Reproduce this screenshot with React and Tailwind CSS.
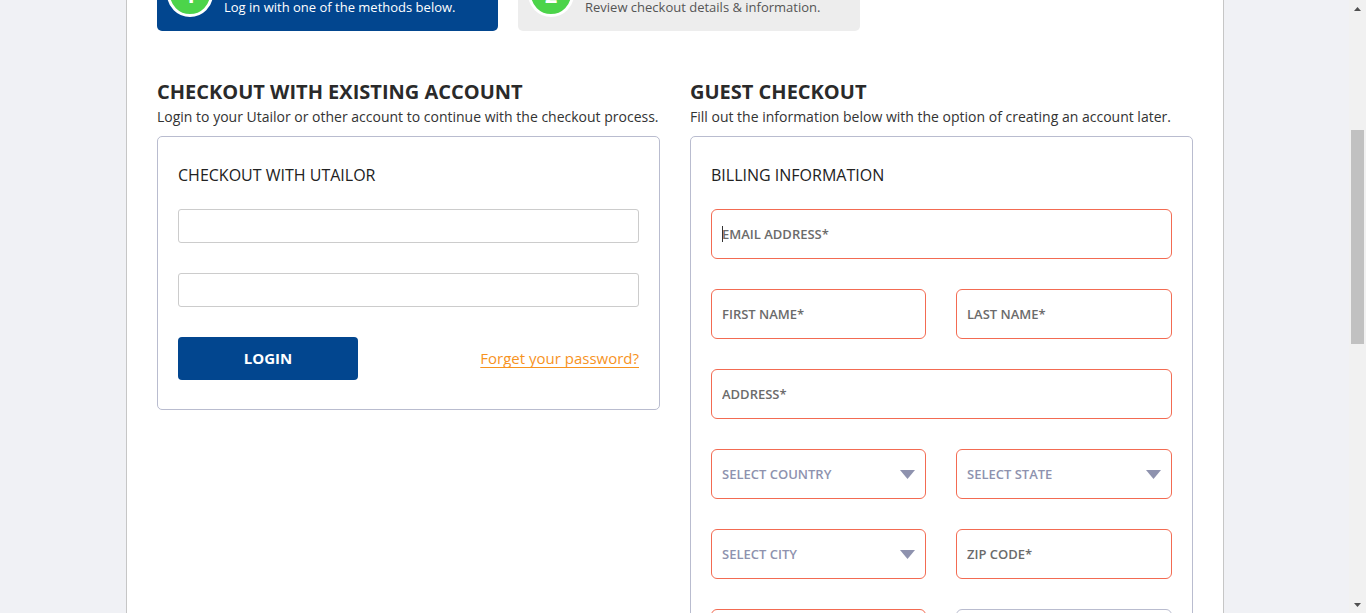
import { useLayoutEffect, useRef } from "react";

const billingRows = [
  [{ label: "EMAIL ADDRESS*", full: true, focused: true }],
  [{ label: "FIRST NAME*" }, { label: "LAST NAME*" }],
  [{ label: "ADDRESS*", full: true }],
  [
    { label: "SELECT COUNTRY", select: true },
    { label: "SELECT STATE", select: true },
  ],
  [{ label: "SELECT CITY", select: true }, { label: "ZIP CODE*" }],
  [{ label: "PHONE NUMBER*" }, { label: "COMPANY NAME", optional: true }],
];

const Triangle = () => (
  <svg width="15" height="9" viewBox="0 0 15 9" className="shrink-0">
    <polygon points="0,0 15,0 7.5,9" fill="#8e92ae" />
  </svg>
);

const BillingField = ({ label, full, select, focused, optional }) => {
  const border = optional ? "border-[#b9bccf]" : "border-[#f36b52]";

  if (select) {
    return (
      <button
        type="button"
        className={`flex h-[50px] w-full items-center justify-between rounded-[6px] border ${border} bg-white pl-[10px] pr-[10px] text-left text-[13px] font-semibold text-[#8e92ae]`}
      >
        <span className="pt-[2px]">{label}</span>
        <Triangle />
      </button>
    );
  }

  return (
    <div className={`relative ${full ? "col-span-2" : ""}`}>
      <input
        type="text"
        placeholder={label}
        className={`block h-[50px] w-full rounded-[6px] border ${border} bg-white px-[10px] text-[13px] font-semibold text-[#444] outline-none placeholder:text-[#6b6b6b]`}
      />
      {focused && (
        <span className="pointer-events-none absolute left-[11px] top-[17px] h-[16px] w-px bg-[#333]" />
      )}
    </div>
  );
};

const StepCard = ({ number, title, text, active, width }) => (
  <div
    className={`flex h-[71px] items-start gap-[11px] rounded-[5px] px-[10px] pt-[11px] ${width} ${
      active ? "bg-[#02468f] text-white" : "bg-[#ededed] text-[#555]"
    }`}
  >
    <div className="flex h-[46px] w-[46px] shrink-0 items-center justify-center rounded-full border-[3px] border-white bg-[#4cd44a] text-[22px] font-bold leading-none text-white">
      {number}
    </div>
    <div className="flex flex-col pt-[7px]">
      <span className="text-[15px] font-bold leading-[20px]">{title}</span>
      <span className="text-[13px] leading-[18px]">{text}</span>
    </div>
  </div>
);

const FakeScrollbar = () => (
  <div className="flex h-full w-[17px] shrink-0 flex-col bg-[#f1f1f1]">
    <div className="flex h-[17px] items-center justify-center">
      <svg width="7" height="4" viewBox="0 0 7 4">
        <polygon points="0,4 7,4 3.5,0" fill="#505050" />
      </svg>
    </div>
    <div className="mx-[2px] mt-[113px] h-[214px] bg-[#c1c1c1]" />
    <div className="mt-auto flex h-[17px] items-center justify-center">
      <svg width="7" height="4" viewBox="0 0 7 4">
        <polygon points="0,0 7,0 3.5,4" fill="#505050" />
      </svg>
    </div>
  </div>
);

export default function App() {
  const scrollRef = useRef(null);

  // page is shown scrolled down past the header
  useLayoutEffect(() => {
    if (scrollRef.current) scrollRef.current.scrollTop = 60;
  }, []);

  return (
    <div className="flex h-[613px] overflow-hidden bg-[#f0f1f5] font-['Open_Sans',sans-serif] text-[#2a2a2a]">
      <div
        ref={scrollRef}
        className="h-full min-w-0 flex-1 overflow-y-auto pl-[126px] [scrollbar-width:none]"
      >
        <div className="min-h-full w-[1098px] border-x border-[#c6c6c6] bg-white px-[30px] pb-[60px] pt-[20px]">
          <div className="flex gap-[20px]">
            <StepCard
              number="1"
              title="SIGN IN"
              text="Log in with one of the methods below."
              width="w-[341px]"
              active
            />
            <StepCard
              number="2"
              title="CHECKOUT"
              text="Review checkout details & information."
              width="w-[342px]"
            />
          </div>

          <div className="mt-[47px] grid grid-cols-2 items-start gap-[30px]">
            <section>
              <h2 className="text-[20px] font-bold leading-[28px] text-[#2a2a2a]">
                CHECKOUT WITH EXISTING ACCOUNT
              </h2>
              <p className="mt-[1px] text-[14px] leading-[20px] text-[#333]">
                Login to your Utailor or other account to continue with the checkout process.
              </p>
              <div className="mt-[9px] rounded-[5px] border border-[#b9bccf] px-[20px] pb-[29px] pt-[26px]">
                <h3 className="text-[16px] leading-[24px] text-[#222]">CHECKOUT WITH UTAILOR</h3>
                <div className="mt-[22px] flex flex-col gap-[30px]">
                  <input
                    type="email"
                    className="block h-[34px] w-full rounded-[3px] border border-[#cccccc] px-[10px] text-[14px] outline-none"
                  />
                  <input
                    type="password"
                    className="block h-[34px] w-full rounded-[3px] border border-[#cccccc] px-[10px] text-[14px] outline-none"
                  />
                </div>
                <div className="mt-[30px] flex items-center justify-between">
                  <button
                    type="button"
                    className="h-[43px] w-[180px] rounded-[4px] bg-[#02468f] text-[15px] font-bold text-white"
                  >
                    LOGIN
                  </button>
                  <a href="#" className="text-[15px] text-[#f7931e] underline underline-offset-[3px]">
                    Forget your password?
                  </a>
                </div>
              </div>
            </section>

            <section>
              <h2 className="text-[20px] font-bold leading-[28px] text-[#2a2a2a]">GUEST CHECKOUT</h2>
              <p className="mt-[1px] text-[14px] leading-[20px] text-[#333]">
                Fill out the information below with the option of creating an account later.
              </p>
              <div className="mt-[9px] rounded-[5px] border border-[#b9bccf] px-[20px] pb-[30px] pt-[26px]">
                <h3 className="text-[16px] leading-[24px] text-[#222]">BILLING INFORMATION</h3>
                <div className="mt-[22px] grid grid-cols-[215px_1fr] gap-[30px]">
                  {billingRows.flat().map((field) => (
                    <div key={field.label} className={field.full ? "col-span-2" : ""}>
                      <BillingField {...field} />
                    </div>
                  ))}
                </div>
              </div>
            </section>
          </div>
        </div>
      </div>
      <FakeScrollbar />
    </div>
  );
}
